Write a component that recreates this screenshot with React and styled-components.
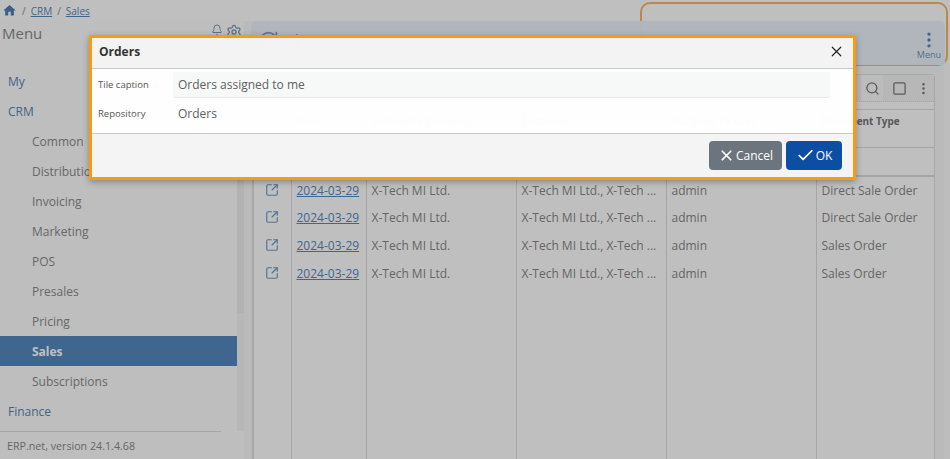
import React from 'react';
import styled, { createGlobalStyle } from 'styled-components';
import { MdHome } from 'react-icons/md';
import {
  Bell,
  Check,
  EllipsisVertical,
  Plus,
  RotateCw,
  Search,
  Settings,
  Square,
  SquareArrowOutUpRight,
  X,
} from 'lucide-react';

const Global = createGlobalStyle`
  html, body {
    margin: 0;
    height: 100%;
    overflow: hidden;
    background: #fff;
    font-family: "Open Sans", "Liberation Sans", sans-serif;
  }
  #root { height: 100%; }
`;

const Page = styled.div`
  position: relative;
  width: 950px;
  height: 459px;
  overflow: hidden;
  background: #fff;
`;

const Breadcrumb = styled.nav`
  height: 21px;
  display: flex;
  align-items: center;
  gap: 5px;
  padding: 0 2px;
  font-size: 10px;
  color: #888;
  svg { color: #4f7fb5; margin: -1px 0 0 0; }
`;

const Crumb = styled.a`
  color: #5588bf;
  text-decoration: underline;
`;

const Highlight = styled.div`
  position: absolute;
  left: 640px;
  top: 2px;
  width: 304px;
  height: 60px;
  border: 2px solid #f5b860;
  border-radius: 10px;
`;

const Body = styled.div`
  display: grid;
  grid-template-columns: 244px 1fr;
  height: 438px;
`;

const Sidebar = styled.aside`
  display: flex;
  flex-direction: column;
  min-height: 0;
  background: #fefefe;
`;

const SidebarHead = styled.div`
  height: 45px;
  flex: none;
  box-sizing: border-box;
  display: flex;
  justify-content: space-between;
  padding: 2px 2px 0 2px;
  font-size: 15px;
  color: #8a8a8a;
  svg { color: #7c99ba; }
`;

const HeadIcons = styled.div`
  display: flex;
  gap: 3px;
  margin-top: 1px;
`;

const MenuScroll = styled.div`
  flex: 1;
  min-height: 0;
  display: grid;
  grid-template-columns: 1fr 7px;
`;

const ScrollTrack = styled.div`
  background: linear-gradient(to bottom, #eeeeee 247px, #f5f5f5 247px);
`;

const MenuItem = styled.div`
  height: 30px;
  display: flex;
  align-items: center;
  padding-left: ${(p) => (p.$sub ? '32px' : '8px')};
  font-size: 12px;
  font-weight: ${(p) => (p.$active ? 700 : 400)};
  color: ${(p) => (p.$active ? '#fff' : p.$sub ? '#8a8a8a' : '#5a85b5')};
  background: ${(p) => (p.$active ? '#5588bf' : '#fefefe')};
`;

const Version = styled.div`
  height: 28px;
  width: 221px;
  flex: none;
  box-sizing: border-box;
  display: flex;
  align-items: center;
  padding-left: 7px;
  font-size: 10.7px;
  color: #8a8a8a;
  border-top: 1px solid #ddd;
`;

const Main = styled.main`
  display: flex;
  flex-direction: column;
  min-width: 0;
  padding-left: 7px;
  background: linear-gradient(to right, #f9f9f9 700px, #fdfdfd 700px);
`;

const Toolbar = styled.div`
  height: 44px;
  width: 694px;
  flex: none;
  display: flex;
  align-items: center;
  justify-content: space-between;
  padding: 0 4px 0 7px;
  box-sizing: border-box;
  background: rgba(235, 242, 252, 0.96);
  border-radius: 6px 6px 0 0;
  position: relative;
  svg { color: #7e9cbe; }
`;

const ToolGroup = styled.div`
  display: flex;
  align-items: center;
  gap: 9px;
  margin-top: -6px;
`;

const MenuButton = styled.div`
  display: flex;
  flex-direction: column;
  align-items: center;
  font-size: 9px;
  line-height: 11px;
  color: #6f94bd;
  margin-top: 3px;
  svg { color: #5588bf; fill: #5588bf; margin-bottom: -1px; }
`;

const GridPanel = styled.section`
  width: 683px;
  margin: 9px 0 0 1px;
  box-sizing: border-box;
  flex: 1;
  min-height: 0;
  display: flex;
  flex-direction: column;
  background: #fff;
  border: 1px solid #e1e1e1;
  border-left-width: 2px;
  border-bottom: 0;
  border-radius: 4px 4px 0 0;
`;

const GridBar = styled.div`
  height: 26px;
  flex: none;
  display: flex;
  align-items: center;
  justify-content: flex-end;
  gap: 9px;
  padding-right: 3px;
  background: #f5f5f5;
  border-bottom: 1px dotted #ddd;
  margin-bottom: 7px;
  svg { color: #777; }
`;

const SearchWrap = styled.div`
  width: 22px;
  height: 26px;
  display: flex;
  align-items: center;
  justify-content: center;
  background: #fbfbfb;
`;

const Table = styled.table`
  flex: 1;
  width: 100%;
  height: 100%;
  border-collapse: collapse;
  table-layout: fixed;
  font-size: 12px;
  color: #888;
  th, td {
    border-left: 1px solid #dcdcdc;
    padding: 0 5px;
    text-align: left;
    white-space: nowrap;
    overflow: hidden;
  }
  th:first-child, td:first-child { border-left: 0; }
`;

const HeadRow = styled.tr`
  height: 38px;
  border-top: 1px solid #dcdcdc;
  border-bottom: 1px solid #dcdcdc;
  th {
    vertical-align: top;
    padding-top: 4px;
    font-size: 10px;
    font-weight: 700;
    color: #777;
  }
`;

const FilterRow = styled.tr`
  height: 28px;
  border-bottom: 2px solid #dcdcdc;
`;

const DataRow = styled.tr`
  height: 28px;
`;

const DateLink = styled.a`
  color: #5588bf;
  text-decoration: underline;
`;

const OpenCell = styled.td`
  text-align: center !important;
  svg { color: #6f98c6; vertical-align: middle; margin-top: -3px; }
`;

const Overlay = styled.div`
  position: absolute;
  inset: 0;
  background: rgba(0, 0, 0, 0.25);
`;

const Dialog = styled.div`
  position: absolute;
  left: 89px;
  top: 35px;
  width: 767px;
  height: 145px;
  box-sizing: border-box;
  border: 3px solid #f89c0e;
  border-radius: 2px;
  display: flex;
  flex-direction: column;
  box-shadow: 0 2px 6px rgba(0, 0, 0, 0.3);
`;

const DialogHead = styled.header`
  height: 31px;
  flex: none;
  box-sizing: border-box;
  display: flex;
  align-items: center;
  justify-content: space-between;
  padding: 0 8px 3px 7px;
  background: rgba(244, 244, 244, 0.985);
  border-bottom: 1px solid #c9c9c9;
  font-size: 12px;
  font-weight: 700;
  color: #333;
  svg { color: #222; }
`;

const DialogBody = styled.div`
  flex: 1;
  padding: 1px 23px 0 6px;
  background: rgba(255, 255, 255, 0.985);
`;

const Field = styled.div`
  height: 29px;
  display: grid;
  grid-template-columns: 75px 1fr;
  align-items: center;
`;

const FieldLabel = styled.label`
  font-size: 9.5px;
  color: #555;
`;

const FieldValue = styled.div`
  height: ${(p) => (p.$boxed ? '25px' : 'auto')};
  display: flex;
  align-items: center;
  padding-left: 5px;
  font-size: 12px;
  color: #5f5f5f;
  border-radius: 3px;
  background: ${(p) => (p.$boxed ? '#f7f8f8' : 'transparent')};
  border-bottom: ${(p) => (p.$boxed ? '1px solid #e3e8ee' : '0')};
`;

const DialogFoot = styled.footer`
  height: 44px;
  flex: none;
  box-sizing: border-box;
  display: flex;
  align-items: center;
  justify-content: flex-end;
  gap: 4px;
  padding: 0 11px 0 0;
  background: rgba(245, 245, 245, 0.985);
  border-top: 1px solid #c9c9c9;
`;

const Button = styled.button`
  height: 29px;
  width: ${(p) => p.$width}px;
  display: flex;
  align-items: center;
  justify-content: center;
  gap: 1px;
  padding: 0;
  border: 0;
  border-radius: 4px;
  font-family: inherit;
  font-size: 12px;
  font-weight: 500;
  color: #fff;
  background: ${(p) => (p.$primary ? '#0b4ea2' : '#6c757d')};
`;

const menu = [
  { label: 'My' },
  { label: 'CRM' },
  { label: 'Common', sub: true },
  { label: 'Distribution', sub: true },
  { label: 'Invoicing', sub: true },
  { label: 'Marketing', sub: true },
  { label: 'POS', sub: true },
  { label: 'Presales', sub: true },
  { label: 'Pricing', sub: true },
  { label: 'Sales', sub: true, active: true },
  { label: 'Subscriptions', sub: true },
  { label: 'Finance' },
];

const rows = [
  { id: 1, type: 'Direct Sale Order' },
  { id: 2, type: 'Direct Sale Order' },
  { id: 3, type: 'Sales Order' },
  { id: 4, type: 'Sales Order' },
];

export default function App() {
  return (
    <Page>
      <Global />
      <Breadcrumb>
        <MdHome size={15} />
        <span>/</span>
        <Crumb>CRM</Crumb>
        <span>/</span>
        <Crumb>Sales</Crumb>
      </Breadcrumb>
      <Highlight />
      <Body>
        <Sidebar>
          <SidebarHead>
            Menu
            <HeadIcons>
              <Bell size={12} />
              <Settings size={16} />
            </HeadIcons>
          </SidebarHead>
          <MenuScroll>
            <div>
              {menu.map((item) => (
                <MenuItem key={item.label} $sub={item.sub} $active={item.active}>
                  {item.label}
                </MenuItem>
              ))}
            </div>
            <ScrollTrack />
          </MenuScroll>
          <Version>ERP.net, version 24.1.4.68</Version>
        </Sidebar>
        <Main>
          <Toolbar>
            <ToolGroup>
              <RotateCw size={21} />
              <Plus size={18} />
            </ToolGroup>
            <MenuButton>
              <EllipsisVertical size={20} />
              Menu
            </MenuButton>
          </Toolbar>
          <GridPanel>
            <GridBar>
              <SearchWrap>
                <Search size={15} />
              </SearchWrap>
              <Square size={15} />
              <EllipsisVertical size={15} />
            </GridBar>
            <Table>
              <colgroup>
                <col width="37" />
                <col width="75" />
                <col width="150" />
                <col width="150" />
                <col width="150" />
                <col width="118" />
              </colgroup>
              <thead>
                <HeadRow>
                  <th />
                  <th>Date</th>
                  <th>Enterprise Company</th>
                  <th>Customer</th>
                  <th>Assigned To User</th>
                  <th>Document Type</th>
                </HeadRow>
                <FilterRow>
                  <th />
                  <th />
                  <th />
                  <th />
                  <th />
                  <th />
                </FilterRow>
              </thead>
              <tbody>
                {rows.map((row) => (
                  <DataRow key={row.id}>
                    <OpenCell>
                      <SquareArrowOutUpRight size={14} />
                    </OpenCell>
                    <td>
                      <DateLink>2024-03-29</DateLink>
                    </td>
                    <td>X-Tech MI Ltd.</td>
                    <td>X-Tech MI Ltd., X-Tech ...</td>
                    <td>admin</td>
                    <td>{row.type}</td>
                  </DataRow>
                ))}
                <tr>
                  <td />
                  <td />
                  <td />
                  <td />
                  <td />
                  <td />
                </tr>
              </tbody>
            </Table>
          </GridPanel>
        </Main>
      </Body>
      <Overlay />
      <Dialog>
        <DialogHead>
          Orders
          <X size={17} strokeWidth={1.7} />
        </DialogHead>
        <DialogBody>
          <Field>
            <FieldLabel>Tile caption</FieldLabel>
            <FieldValue $boxed>Orders assigned to me</FieldValue>
          </Field>
          <Field>
            <FieldLabel>Repository</FieldLabel>
            <FieldValue>Orders</FieldValue>
          </Field>
        </DialogBody>
        <DialogFoot>
          <Button $width={73}>
            <X size={17} strokeWidth={2.4} />
            Cancel
          </Button>
          <Button $primary $width={56}>
            <Check size={19} strokeWidth={2.2} />
            OK
          </Button>
        </DialogFoot>
      </Dialog>
    </Page>
  );
}
